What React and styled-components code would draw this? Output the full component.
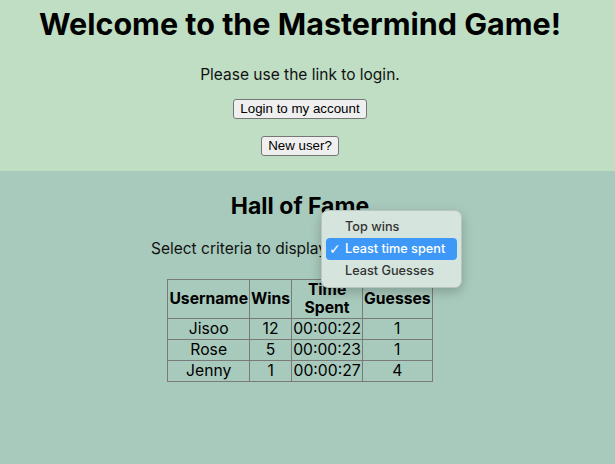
import styled, { createGlobalStyle } from "styled-components";

const GlobalStyle = createGlobalStyle`
    html, body {
        margin: 0;
        padding: 0;
        background: #a8cabc;
        font-family: Inter, "Noto Sans", sans-serif;
        color: #000;
    }
`;

const PLAYERS = [
    { name: 'Jisoo', wins: 12, time: '00:00:22', guesses: 1 },
    { name: 'Rose', wins: 5, time: '00:00:23', guesses: 1 },
    { name: 'Jenny', wins: 1, time: '00:00:27', guesses: 4 },
];

const CRITERIA = ['Top wins', 'Least time spent', 'Least Guesses'];

function App() {
    const selected = 'Least time spent';

    return (
        <Page>
            <GlobalStyle />
            <Welcome>
                <Title>Welcome to the Mastermind Game!</Title>
                <Intro>Please use the link to login.</Intro>
                <NativeButton>Login to my account</NativeButton>
                <NativeButton>New user?</NativeButton>
            </Welcome>
            <HallOfFame>
                <SubTitle>Hall of Fame</SubTitle>
                <Criteria>
                    Select criteria to display
                    <SelectWrap>
                        <Select defaultValue={selected}>
                            {CRITERIA.map(c => <option key={c}>{c}</option>)}
                        </Select>
                        <Menu>
                            {CRITERIA.map(c => (
                                <MenuItem key={c} active={c === selected}>
                                    <Check>{c === selected ? '✓' : ''}</Check>
                                    {c}
                                </MenuItem>
                            ))}
                        </Menu>
                    </SelectWrap>
                </Criteria>
                <Table>
                    <thead>
                        <tr>
                            <Th>Username</Th>
                            <Th>Wins</Th>
                            <Th narrow>Time Spent</Th>
                            <Th>Guesses</Th>
                        </tr>
                    </thead>
                    <tbody>
                        {PLAYERS.map(p => (
                            <tr key={p.name}>
                                <Td>{p.name}</Td>
                                <Td>{p.wins}</Td>
                                <Td>{p.time}</Td>
                                <Td>{p.guesses}</Td>
                            </tr>
                        ))}
                    </tbody>
                </Table>
            </HallOfFame>
        </Page>
    );
}

export default App;

// the page is centred on 600px: the reference leaves room for a scrollbar
const Page = styled.div`
    min-height: 464px;
    display: flex;
    flex-direction: column;
`;

const Welcome = styled.section`
    background: #bfdec4;
    height: 171px;
    box-sizing: border-box;
    padding: 5px 15px 0 0;
    display: flex;
    flex-direction: column;
    align-items: center;
`;

const Title = styled.h1`
    margin: 0;
    font-size: 30.5px;
    font-weight: 700;
    line-height: 38px;
`;

const Intro = styled.p`
    margin: 22px 0 15px;
    font-size: 15.5px;
    line-height: 19px;
    color: #111;
`;

const NativeButton = styled.button`
    font-family: "Liberation Sans", Arial, sans-serif;
    font-size: 13.33px;
    line-height: 16px;
    padding: 1px 6px;
    background: #efefef;
    color: #000;
    border: 1px solid #767676;
    border-radius: 3px;
    margin-bottom: 17px;
`;

const HallOfFame = styled.section`
    flex: 1;
    background: #a8cabc;
    padding: 21px 15px 0 0;
    display: flex;
    flex-direction: column;
    align-items: center;
`;

const SubTitle = styled.h2`
    margin: 0;
    font-size: 23px;
    font-weight: 700;
    line-height: 29px;
`;

const Criteria = styled.div`
    margin-top: 18px;
    font-size: 15.5px;
    line-height: 20px;
    color: #111;
    display: flex;
    align-items: center;
    gap: 4px;
`;

const SelectWrap = styled.div`
    position: relative;
    display: inline-block;
`;

const Select = styled.select`
    font-family: "Liberation Sans", Arial, sans-serif;
    font-size: 13.33px;
    width: 118px;
    height: 20px;
`;

const Menu = styled.div`
    position: absolute;
    left: -10px;
    top: -29px;
    width: 141px;
    box-sizing: border-box;
    padding: 5px 4px;
    background: #d5e4dc;
    border: 1px solid #b9c6c0;
    border-radius: 7px;
    box-shadow: 0 4px 12px rgba(0, 0, 0, 0.22);
    font-family: Inter, "Noto Sans", sans-serif;
    font-size: 12.7px;
    font-weight: 500;
`;

const MenuItem = styled.div`
    display: flex;
    align-items: center;
    height: 22px;
    padding: 0 3px;
    border-radius: 4px;
    color: ${props => props.active ? '#fff' : '#333'};
    background: ${props => props.active ? '#3d98f7' : 'transparent'};
`;

const Check = styled.span`
    width: 16px;
    font-family: "DejaVu Sans", sans-serif;
    font-size: 14px;
    font-weight: 400;
`;

const Table = styled.table`
    margin-top: 19px;
    border-collapse: collapse;
    border: 1px solid #7a7a7a;
    font-size: 15.7px;
`;

const Th = styled.th`
    border: 1px solid #7a7a7a;
    padding: 1px;
    line-height: 18px;
    font-weight: 700;
    max-width: ${props => props.narrow ? '66px' : 'none'};
`;

const Td = styled.td`
    border: 1px solid #7a7a7a;
    padding: 1px;
    line-height: 18px;
    text-align: center;
`;
